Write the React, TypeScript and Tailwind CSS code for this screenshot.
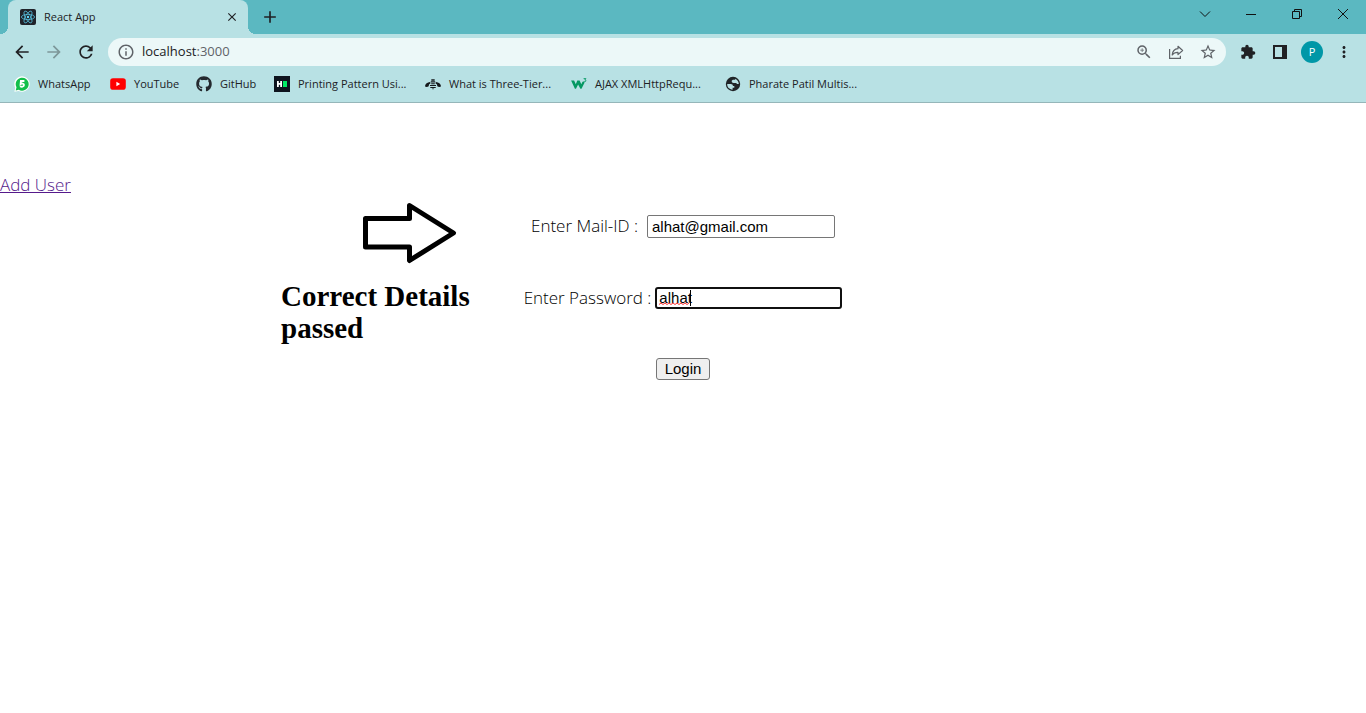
import { useState } from "react";
import type { ReactNode } from "react";
import {
  MdAdd,
  MdArrowBack,
  MdArrowForward,
  MdClose,
  MdExtension,
  MdMoreVert,
  MdOutlineInfo,
  MdRefresh,
  MdStarBorder,
  MdZoomIn,
} from "react-icons/md";
import { FaGithub } from "react-icons/fa";

function ReactLogo() {
  return (
    <svg className="size-4" viewBox="0 0 16 16" aria-hidden="true">
      <rect width="16" height="16" rx="2" fill="#20232a" />
      <g fill="none" stroke="#55bddb" strokeWidth="0.8">
        <ellipse cx="8" cy="8" rx="6.6" ry="2.6" />
        <ellipse cx="8" cy="8" rx="6.6" ry="2.6" transform="rotate(60 8 8)" />
        <ellipse cx="8" cy="8" rx="6.6" ry="2.6" transform="rotate(120 8 8)" />
      </g>
      <circle cx="8" cy="8" r="1.2" fill="#61dafb" />
    </svg>
  );
}

function WhatsAppIcon() {
  return (
    <svg className="size-4" viewBox="0 0 16 16" aria-hidden="true">
      <path d="M.4 15.8 1.2 11.7A7.700 7.700 0 1 1 4.500 14.900Z" fill="#fff" />
      <path d="M1.700 14.500 2.500 11.300A6.500 6.500 0 1 1 4.800 13.700Z" fill="#12bf4b" />
      <path
        d="M10.400 5H6.900L6.600 8C7.500 7.300 10 7.200 10 9.100 10 10.900 7.500 11.100 6 10.200"
        fill="none"
        stroke="#fff"
        strokeWidth="1.800"
      />
    </svg>
  );
}

function YouTubeIcon() {
  return (
    <svg className="size-4" viewBox="0 0 16 16" aria-hidden="true">
      <rect x="0.200" y="2.300" width="15.600" height="11.400" rx="2.800" fill="#f00" />
      <path d="M6.400 5.800v4.400L10.200 8z" fill="#fff" />
    </svg>
  );
}

function HackerIcon() {
  return (
    <svg className="size-4" viewBox="0 0 16 16" aria-hidden="true">
      <rect width="16" height="16" fill="#0e141e" />
      <path d="M3 5h1.800v2.100h1.400V5H8v6H6.200V8.800H4.800V11H3z" fill="#fff" />
      <rect x="9" y="5" width="4" height="6" fill="#00ea64" />
    </svg>
  );
}

function BeeIcon() {
  return (
    <svg className="size-4" viewBox="0 0 16 16" aria-hidden="true">
      <g fill="#15191c">
        <path d="M.1 9.800C.2 8 2.400 6.200 5 6l.6 1.300L4 8.600l-.3 1.600-1.700.9-1.700-.3z" />
        <path d="M15.900 9.800C15.800 8 13.600 6.200 11 6l-.6 1.300L12 8.600l.3 1.600 1.700.9 1.700-.3z" />
        <path d="M6.300 3.200h3.400v1.500H6.300zM5.800 5.300h4.400v1.200H5.800zM6.200 7.200h3.600v1.100H6.200zM5 9h6v1.100H5zM5.300 10.900h5.400V12H5.300zM6.700 12.600h2.600L8 13.500z" />
      </g>
    </svg>
  );
}

function W3Icon() {
  return (
    <svg className="size-4" viewBox="0 0 16 16" aria-hidden="true">
      <path d="M.1 4.400h3l1.700 3.800 1.500-3.800h2.300l1.700 3.800 1.200-2.500h1.600l.4 1-3 6H9.400L7.100 8.400 5 12.700H3.900z" fill="#059862" />
      <path d="M12.600 2.600h2.300L13.800 4c1.900 0 1.500 2.200-1.200 1.600" fill="none" stroke="#059862" strokeWidth="0.900" />
    </svg>
  );
}

function GlobeIcon() {
  return (
    <svg className="size-4" viewBox="0 0 16 16" aria-hidden="true">
      <circle cx="8" cy="8" r="7.200" fill="#202427" />
      <path
        d="M2.200 8.100H5.600C7.200 8.100 7.900 8.900 7.900 9.900H9.300V11.700H7.600V13.700C4.500 13.500 2.100 11.400 2.200 8.100ZM10.200 2.700C12.500 3.600 13.800 5.700 13.800 8.100H12.800C11.900 8.100 11.500 7.600 11.300 7H8.600C7.400 7 6.700 6.300 6.700 5.300 6.700 4.300 7.500 3.800 8.700 3.800H10.200Z"
        fill="#b8e1e4"
      />
    </svg>
  );
}

function ShareIcon() {
  return (
    <svg className="size-4" viewBox="0 0 16 16" fill="none" stroke="#5f6368" strokeWidth="1.200" aria-hidden="true">
      <path d="M1.600 5v9.400h10.800v-2.600" />
      <path d="M10 2.300 14.600 6.500 10 10.600V8.300C7.400 8.200 5.600 9 4.200 11 4.500 7.600 6.500 5 10 4.700z" strokeLinejoin="round" />
    </svg>
  );
}

function IconButton({ label, children }: { label: string; children: ReactNode }) {
  return (
    <button type="button" aria-label={label} className="flex h-7 w-8 shrink-0 items-center justify-center text-[#202124]">
      {children}
    </button>
  );
}

function WindowButton({ label, d }: { label: string; d: string }) {
  return (
    <button type="button" aria-label={label} className="flex h-7 w-[46px] items-center justify-center">
      <svg className="size-3" viewBox="0 0 12 12" fill="none" stroke="#111" aria-hidden="true">
        <path d={d} />
      </svg>
    </button>
  );
}

const bookmarks = [
  { title: "WhatsApp", icon: <WhatsAppIcon />, width: "w-24" },
  { title: "YouTube", icon: <YouTubeIcon />, width: "w-[86px]" },
  { title: "GitHub", icon: <FaGithub className="size-4 text-[#24292e]" />, width: "w-[78px]" },
  { title: "Printing Pattern Usi...", icon: <HackerIcon />, width: "w-[151px]" },
  { title: "What is Three-Tier...", icon: <BeeIcon />, width: "w-[146px]" },
  { title: "AJAX XMLHttpRequ...", icon: <W3Icon />, width: "w-[154px]" },
  { title: "Pharate Patil Multis...", icon: <GlobeIcon />, width: "w-[154px]" },
];

function TabStrip() {
  return (
    <div className="flex h-[34px] bg-[#5bb8c1] pl-2">
      <div className="relative flex w-60 items-center rounded-t-lg bg-[#b8e1e4] px-3 text-[#202124]">
        <span className="absolute bottom-0 -left-2 size-2 bg-[radial-gradient(circle_at_0_0,transparent_8px,#b8e1e4_8px)]" />
        <span className="absolute -right-2 bottom-0 size-2 bg-[radial-gradient(circle_at_100%_0,transparent_8px,#b8e1e4_8px)]" />
        <ReactLogo />
        <span className="ml-2 flex-1 text-[11px]">React App</span>
        <button type="button" aria-label="Close tab" className="-mr-1 p-px">
          <MdClose className="size-3.5" />
        </button>
      </div>
      <button type="button" aria-label="New tab" className="ml-3 text-[#202124]">
        <MdAdd className="size-5" />
      </button>
      <div className="ml-auto flex">
        <WindowButton label="Search tabs" d="M1 3.500 6 8.500 11 3.500" />
        <WindowButton label="Minimize" d="M1 6.500H11" />
        <WindowButton label="Restore" d="M1.500 3.500h7v7h-7zM3.500 3.500v-2h7v7h-2" />
        <WindowButton label="Close" d="M1 1 11 11M11 1 1 11" />
      </div>
    </div>
  );
}

function Toolbar() {
  return (
    <div className="flex h-9 items-center px-1.5">
      <IconButton label="Back"><MdArrowBack className="size-5" /></IconButton>
      <IconButton label="Forward"><MdArrowForward className="size-5 text-[#7d9799]" /></IconButton>
      <IconButton label="Reload"><MdRefresh className="size-5" /></IconButton>
      <div className="ml-1.5 flex h-7 flex-1 items-center rounded-full bg-[#ecf8f8] pr-0.5 pl-[9px] text-[#5f6368]">
        <MdOutlineInfo className="size-[18px]" />
        <span className="ml-[7px] flex-1 text-[13px]">
          <span className="text-[#202124]">localhost</span>:3000
        </span>
        <IconButton label="Zoom"><MdZoomIn className="size-[18px] text-[#5f6368]" /></IconButton>
        <IconButton label="Share"><ShareIcon /></IconButton>
        <IconButton label="Bookmark this tab"><MdStarBorder className="size-[18px] text-[#5f6368]" /></IconButton>
      </div>
      <div className="ml-1.5 flex">
        <IconButton label="Extensions"><MdExtension className="size-4" /></IconButton>
        <IconButton label="Side panel">
          <svg className="size-3.5" viewBox="0 0 14 14" aria-hidden="true">
            <path d="M0 0h14v14H0zM2 2v10h7V2z" fill="#202124" fillRule="evenodd" />
          </svg>
        </IconButton>
        <IconButton label="Profile">
          <span className="flex size-[22px] items-center justify-center rounded-full bg-[#0097a7] text-[11px] text-white">P</span>
        </IconButton>
        <IconButton label="Menu"><MdMoreVert className="size-[18px]" /></IconButton>
      </div>
    </div>
  );
}

function BookmarkBar() {
  return (
    <nav className="flex h-[33px] overflow-hidden border-b border-[#95b6b9] pl-3.5">
      {bookmarks.map(({ title, icon, width }) => (
        <a key={title} href="#" className={`flex h-7 shrink-0 items-center gap-2 text-[11px] whitespace-nowrap text-[#202124] ${width}`}>
          {icon}
          {title}
        </a>
      ))}
    </nav>
  );
}

function LoginPage() {
  const [mail, setMail] = useState("alhat@gmail.com");
  const [password, setPassword] = useState("alhat");
  return (
    <main className="pt-[70px] text-black">
      <a href="#" className="block w-fit text-[17px] leading-6 font-light text-[#551a8b] underline">Add User</a>
      <div className="grid grid-cols-[1fr_320px_1fr] pt-[5px]">
        <div className="mr-7 w-[214px] justify-self-end">
          <svg className="ml-20 block h-[62px] w-24" viewBox="0 0 96 62" fill="none" stroke="#000" strokeWidth="5" strokeLinejoin="round" aria-hidden="true">
            <path d="M4.500 16.500h44V3.500L92.500 31 48.500 58.500V45H4.500z" />
          </svg>
          <h2 className="mt-4 font-['Liberation_Serif',serif] text-[29px] leading-8 font-bold">Correct Details passed</h2>
        </div>
        <form className="flex flex-col items-center gap-12 pt-3" onSubmit={(e) => e.preventDefault()}>
          <div className="flex h-6 items-center gap-1 whitespace-nowrap">
            <label htmlFor="mail" className="min-w-28 text-[17px] leading-6 font-light">Enter Mail-ID :</label>
            <input
              id="mail"
              type="text"
              value={mail}
              onChange={(e) => setMail(e.target.value)}
              className="h-[23px] w-[188px] rounded-xs border border-[#767676] bg-white px-1 font-['Liberation_Sans',sans-serif] text-[15px]"
            />
          </div>
          <div className="flex h-6 items-center gap-1 whitespace-nowrap">
            <label htmlFor="password" className="min-w-28 text-[17px] leading-6 font-light">Enter Password :</label>
            <span className="relative flex">
              <input
                id="password"
                type="text"
                value={password}
                onChange={(e) => setPassword(e.target.value)}
                className="h-[22px] w-[187px] rounded-[3px] border-2 border-[#101010] bg-white px-0.5 font-['Liberation_Sans',sans-serif] text-[15px]"
              />
              <svg className="pointer-events-none absolute top-[3px] left-1 h-4 w-8" viewBox="0 0 32 16" fill="none" aria-hidden="true">
                <path d="M0 14.500 2 13l2 1.500L6 13l2 1.500 2-1.500 2 1.500 2-1.500 2 1.500 2-1.500 2 1.500 2-1.500 2 1.500 2-1.500 2 1.500 2-1.500" stroke="#f33" />
                <path d="M31.500 0v16" stroke="#000" />
              </svg>
            </span>
          </div>
          <button
            type="submit"
            className="h-[22px] w-[54px] rounded-[3px] border border-[#767676] bg-[#efefef] font-['Liberation_Sans',sans-serif] text-[15px] leading-5"
          >
            Login
          </button>
        </form>
      </div>
    </main>
  );
}

export default function App() {
  return (
    <div className="min-h-screen bg-white font-['Open_Sans','Noto_Sans',sans-serif]">
      <header className="bg-[#b8e1e4]">
        <TabStrip />
        <Toolbar />
        <BookmarkBar />
      </header>
      <LoginPage />
    </div>
  );
}
